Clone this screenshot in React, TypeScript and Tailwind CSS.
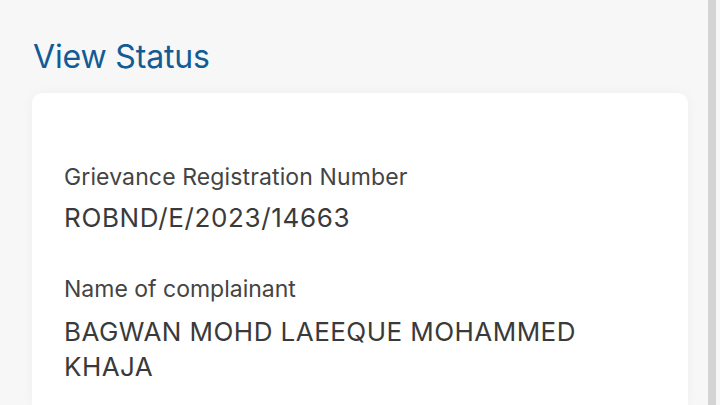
import React from "react";

export default function App() {
  return (
    <div className="flex h-[405px] w-[720px] overflow-hidden bg-[#f7f7f7]" style={{ fontFamily: "Inter, 'Noto Sans', sans-serif" }}>
      <div className="flex w-[708px] flex-col pl-[32px] pr-[20px]">
        <h1 className="mt-[37px] pl-[1px] text-[32px] leading-[40px] font-normal tracking-[-0.15px] text-[#125b94]">View Status</h1>
        <div className="mt-[16px] flex-1 rounded-t-[10px] bg-white px-[32px] pt-[68px] shadow-[0_0_12px_rgba(0,0,0,0.04)]">
          <div className="text-[23px] leading-[32px] tracking-[0.12px] text-[#444444]">Grievance Registration Number</div>
          <div className="mt-[8px] text-[26px] leading-[34px] tracking-[0.65px] text-[#3a3a3a]">ROBND/E/2023/14663</div>
          <div className="mt-[38px] text-[23px] leading-[32px] text-[#444444]">Name of complainant</div>
          <div className="mt-[9px] max-w-[560px] text-[26px] leading-[35px] tracking-[0.45px] text-[#3a3a3a]">BAGWAN MOHD LAEEQUE MOHAMMED KHAJA</div>
        </div>
      </div>
      <div className="h-full w-[8px] bg-[#d4d4d4]" />
    </div>
  );
}
